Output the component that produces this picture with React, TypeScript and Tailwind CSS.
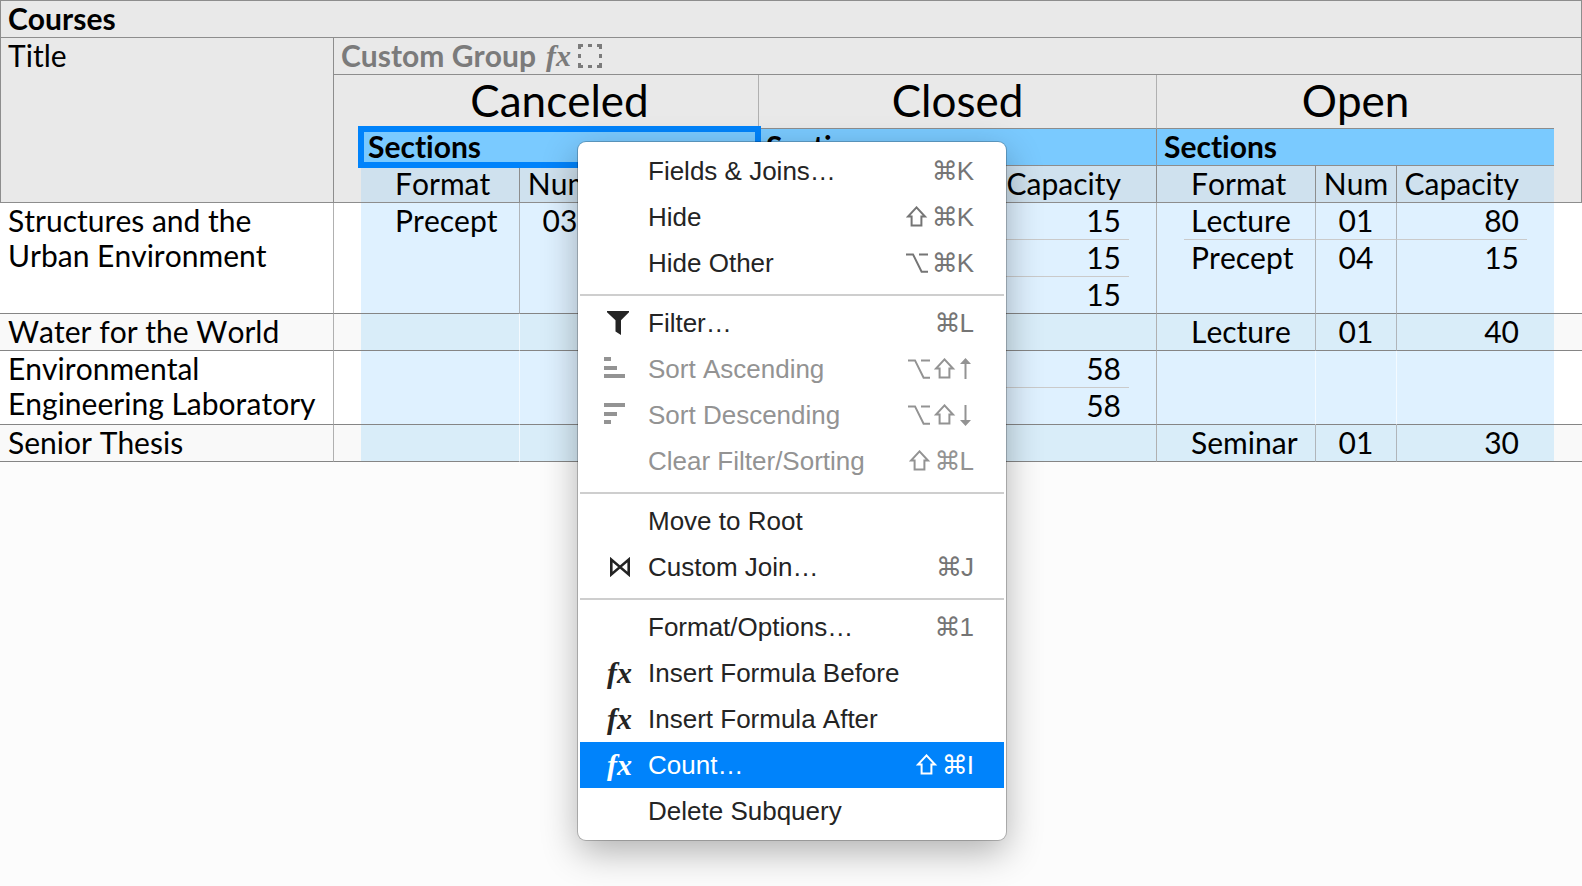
import React from "react";

interface ISection {
  format: string;
  num: string;
  capacity: string;
}

interface ICourse {
  title: string;
  rows: number;
  groups: ISection[][];
}

interface IMenuItem {
  label: string;
  icon?: React.ReactNode;
  keys?: string[];
  disabled?: boolean;
  active?: boolean;
}

const groups = ["Canceled", "Closed", "Open"];

const courses: ICourse[] = [
  {
    title: "Structures and the Urban Environment",
    rows: 3,
    groups: [
      [{ format: "Precept", num: "03", capacity: "" }],
      [
        { format: "", num: "", capacity: "15" },
        { format: "", num: "", capacity: "15" },
        { format: "", num: "", capacity: "15" },
      ],
      [
        { format: "Lecture", num: "01", capacity: "80" },
        { format: "Precept", num: "04", capacity: "15" },
      ],
    ],
  },
  {
    title: "Water for the World",
    rows: 1,
    groups: [[], [], [{ format: "Lecture", num: "01", capacity: "40" }]],
  },
  {
    title: "Environmental Engineering Laboratory",
    rows: 2,
    groups: [
      [],
      [
        { format: "", num: "", capacity: "58" },
        { format: "", num: "", capacity: "58" },
      ],
      [],
    ],
  },
  {
    title: "Senior Thesis",
    rows: 1,
    groups: [[], [], [{ format: "Seminar", num: "01", capacity: "30" }]],
  },
];

const Fx = () => (
  <span className="ml-[3px] font-['Liberation_Serif',serif] text-[30px] leading-[30px] font-bold italic">fx</span>
);

const FilterIcon = () => (
  <svg className="ml-[3px]" width="22" height="24" viewBox="0 0 22 24" fill="currentColor">
    <path d="M0 0H22V1.2L14 9.2V24L8.5 20.4V9.2L0 1.2Z" />
  </svg>
);

const SortAscIcon = () => (
  <svg className="mb-[2px]" width="22" height="22" viewBox="0 0 22 22" fill="currentColor">
    <path d="M0 0H7V4H0ZM0 9H13V13H0ZM0 17H21V21H0Z" />
  </svg>
);

const SortDescIcon = () => (
  <svg className="mb-[2px]" width="22" height="22" viewBox="0 0 22 22" fill="currentColor">
    <path d="M0 0H21V4H0ZM0 9H13V13H0ZM0 17H7V21H0Z" />
  </svg>
);

const JoinIcon = () => (
  <svg className="ml-[6px]" width="20" height="20" viewBox="0 0 20 20" fill="none" stroke="currentColor" strokeWidth="2.6">
    <path d="M1.3 2.6V17.4L18.7 2.6V17.4Z" />
  </svg>
);

const GroupIcon = () => (
  <svg width="24" height="24" viewBox="0 0 24 24" fill="currentColor">
    <path d="M0 0H5V3H3V5H0ZM10 0H14V3H10ZM19 0H24V5H21V3H19ZM0 10H3V14H0ZM21 10H24V14H21ZM0 19H3V21H5V24H0ZM10 21H14V24H10ZM21 19H24V24H19V21H21Z" />
  </svg>
);

const menu: IMenuItem[][] = [
  [
    { label: "Fields & Joins…", keys: ["⌘", "K"] },
    { label: "Hide", keys: ["⇧", "⌘", "K"] },
    { label: "Hide Other", keys: ["⌥", "⌘", "K"] },
  ],
  [
    { label: "Filter…", icon: <FilterIcon />, keys: ["⌘", "L"] },
    { label: "Sort Ascending", icon: <SortAscIcon />, keys: ["⌥", "⇧", "↑"], disabled: true },
    { label: "Sort Descending", icon: <SortDescIcon />, keys: ["⌥", "⇧", "↓"], disabled: true },
    { label: "Clear Filter/Sorting", keys: ["⇧", "⌘", "L"], disabled: true },
  ],
  [
    { label: "Move to Root" },
    { label: "Custom Join…", icon: <JoinIcon />, keys: ["⌘", "J"] },
  ],
  [
    { label: "Format/Options…", keys: ["⌘", "1"] },
    { label: "Insert Formula Before", icon: <Fx /> },
    { label: "Insert Formula After", icon: <Fx /> },
    { label: "Count…", icon: <Fx />, keys: ["⇧", "⌘", "I"], active: true },
    { label: "Delete Subquery" },
  ],
];

const Key = ({ name }: { name: string }) => {
  switch (name) {
    case "⌘":
      return <span className="w-[25px] font-['DejaVu_Sans',sans-serif]">⌘</span>;
    case "⇧":
      return (
        <svg aria-label="Shift" className="mb-[2px]" width="26" height="21" viewBox="0 0 26 21" fill="none" stroke="currentColor" strokeWidth="2">
          <path d="M10.5 1.4L2 10.6H5.6V19.6H15.4V10.6H19Z" />
        </svg>
      );
    case "⌥":
      return (
        <svg aria-label="Option" width="26" height="20" viewBox="0 0 26 20" fill="none" stroke="currentColor" strokeWidth="2">
          <path d="M0 1.4H7L15.6 18.8H22M13 1.4H22" />
        </svg>
      );
    case "↑":
      return (
        <svg aria-label="Up" className="mb-[2px]" width="14" height="21" viewBox="0 0 14 21" fill="currentColor">
          <path d="M5.5 0L11 6H6.5V21H4.5V6H0Z" />
        </svg>
      );
    case "↓":
      return (
        <svg aria-label="Down" width="14" height="21" viewBox="0 0 14 21" fill="currentColor">
          <path d="M5.5 21L11 15H6.5V0H4.5V15H0Z" />
        </svg>
      );
    default:
      return <span>{name}</span>;
  }
};

const MenuItem = ({ label, icon, keys, disabled, active }: IMenuItem) => (
  <button
    type="button"
    role="menuitem"
    disabled={disabled}
    className={`flex h-[46px] w-full items-center pr-[30px] pl-[24px] text-left ${
      active ? "bg-[#0083fb] text-white" : disabled ? "text-[#939393]" : "text-[#242424]"
    }`}
  >
    <span className="flex w-[44px] shrink-0 items-center">{icon}</span>
    <span className="grow whitespace-nowrap">{label}</span>
    {keys && (
      <span className={`flex items-center ${active || disabled ? "" : "text-[#757575]"}`}>
        {keys.map((key) => (
          <Key key={key} name={key} />
        ))}
      </span>
    )}
  </button>
);

const ContextMenu = () => (
  <div
    role="menu"
    className="absolute top-[142px] left-[578px] w-[428px] rounded-lg bg-white px-[2px] py-[6px] font-['Liberation_Sans',sans-serif] text-[26px] leading-[30px] shadow-[0_0_0_1px_rgba(0,0,0,0.22),0_12px_36px_rgba(0,0,0,0.3)]"
  >
    {menu.map((items, i) => (
      <React.Fragment key={i}>
        {i > 0 && <div role="separator" className="mt-2 mb-1 h-[2px] bg-[#cecece]" />}
        {items.map((item) => (
          <MenuItem key={item.label} {...item} />
        ))}
      </React.Fragment>
    ))}
  </div>
);

const GroupCells = ({ sections, index, rows, last, shaded }: {
  sections: ISection[];
  index: number;
  rows: number;
  last: boolean;
  shaded: boolean;
}) => {
  const section = sections[index];
  const bg = shaded ? "bg-[#d9edf9]" : "bg-[#dff1ff]";
  const endOfCourse = index === rows - 1;
  const edgeLine = endOfCourse ? "border-b border-b-[#858585]" : "";
  const rowLine = !endOfCourse && index < sections.length - 1 ? "border-b border-b-[#cacaca]" : edgeLine;
  const divider = sections.length > 0 ? "border-r border-r-[#b0b5ba]" : "border-r border-r-[#f4faff]";

  return (
    <>
      <td className={`${bg} ${edgeLine}`} />
      <td className={`${bg} ${rowLine} ${divider} pl-[7px] align-top`}>{section?.format}</td>
      <td className={`${bg} ${rowLine} ${divider} text-center align-top`}>{section?.num}</td>
      <td className={`${bg} ${rowLine} pr-2 text-right align-top`}>{section?.capacity}</td>
      <td className={`${bg} ${edgeLine} ${last ? "" : "border-r border-r-[#b0b0b0]"}`} />
    </>
  );
};

const App = () => {
  const head = "bg-[#e9e9e9] font-normal text-left";
  const subHead = "border-b border-[#8d8d8d] bg-[#cfe1ee] font-normal align-top";
  const line = "border-b border-b-[#8d8d8d]";

  return (
    <div className="relative min-h-screen bg-[#fcfcfc] font-['Lato',sans-serif] text-[30px] leading-[35px] text-black [font-kerning:none] [font-variant-ligatures:none]">
      <table className="w-full table-fixed border-separate border-spacing-0">
        <colgroup>
          <col className="w-[334px]" />
          <col className="w-[27px]" />
          {groups.map((group, i) => (
            <React.Fragment key={group}>
              <col className="w-[27px]" />
              <col className="w-[132px]" />
              <col className="w-[81px]" />
              <col className="w-[130px]" />
              <col className={i < groups.length - 1 ? "w-[28px]" : "w-[27px]"} />
            </React.Fragment>
          ))}
          <col className="w-[28px]" />
        </colgroup>
        <thead>
          <tr className="h-[38px]">
            <th colSpan={18} className="border border-[#8d8d8d] bg-[#e9e9e9] pl-[7px] text-left align-top font-bold">
              Courses
            </th>
          </tr>
          <tr className="h-[37px]">
            <th rowSpan={4} className={`${head} ${line} border-x border-x-[#8d8d8d] pl-[7px] align-top`}>
              Title
            </th>
            <th colSpan={17} className={`${head} ${line} border-r border-r-[#8d8d8d] pl-[7px] align-top`}>
              <div className="flex items-center text-[#7b7b7b]">
                <span className="mr-[7px] font-bold">Custom Group</span>
                <Fx />
                <span className="ml-[7px]">
                  <GroupIcon />
                </span>
              </div>
            </th>
          </tr>
          <tr className="h-[54px] text-[44px] leading-[50px]">
            <th rowSpan={3} className={`${head} ${line}`} />
            {groups.map((group, i) => (
              <th
                key={group}
                colSpan={5}
                className={`border-b border-b-[#8d8d8d] bg-[#e9e9e9] text-center align-top font-normal ${
                  i < groups.length - 1 ? "border-r border-r-[#b0b0b0]" : ""
                }`}
              >
                {group}
              </th>
            ))}
            <th rowSpan={3} className={`${head} ${line} border-r border-r-[#8d8d8d]`} />
          </tr>
          <tr className="h-[37px]">
            {groups.map((group, i) => (
              <th
                key={group}
                colSpan={5}
                className={`h-[37px] border-b border-b-[#8d8d8d] bg-[#7acaff] text-left font-bold ${
                  i < groups.length - 1 ? "border-r border-r-[#8d8d8d]" : ""
                }`}
              >
                <div
                  className={`h-[36px] pl-[7px] ${
                    i === 0 ? "relative outline-[6px] -outline-offset-[3px] outline-[#0083fb]" : ""
                  }`}
                >
                  Sections
                </div>
              </th>
            ))}
          </tr>
          <tr className="h-[37px]">
            {groups.map((group, i) => (
              <React.Fragment key={group}>
                <th className={subHead} />
                <th className={`${subHead} border-r pl-[7px] text-left`}>Format</th>
                <th className={`${subHead} border-r text-center`}>Num</th>
                <th className={`${subHead} pr-2 text-right`}>Capacity</th>
                <th className={`${subHead} ${i < groups.length - 1 ? "border-r" : ""}`} />
              </React.Fragment>
            ))}
          </tr>
        </thead>
        <tbody>
          {courses.map((course, c) => {
            const shaded = c % 2 === 1;
            const bg = shaded ? "bg-[#f9f9f9]" : "bg-white";
            return Array.from({ length: course.rows }, (_, r) => (
              <tr key={`${course.title}-${r}`} className="h-[37px]">
                {r === 0 && (
                  <>
                    <td
                      rowSpan={course.rows}
                      className={`${bg} border-r border-b border-r-[#b0b0b0] border-b-[#858585] pl-2 align-top`}
                    >
                      {course.title}
                    </td>
                    <td rowSpan={course.rows} className={`${bg} border-b border-b-[#858585]`} />
                  </>
                )}
                {course.groups.map((sections, g) => (
                  <GroupCells
                    key={groups[g]}
                    sections={sections}
                    index={r}
                    rows={course.rows}
                    last={g === groups.length - 1}
                    shaded={shaded}
                  />
                ))}
                {r === 0 && <td rowSpan={course.rows} className={`${bg} border-b border-b-[#858585]`} />}
              </tr>
            ));
          })}
        </tbody>
      </table>
      <ContextMenu />
    </div>
  );
};

export default App;
